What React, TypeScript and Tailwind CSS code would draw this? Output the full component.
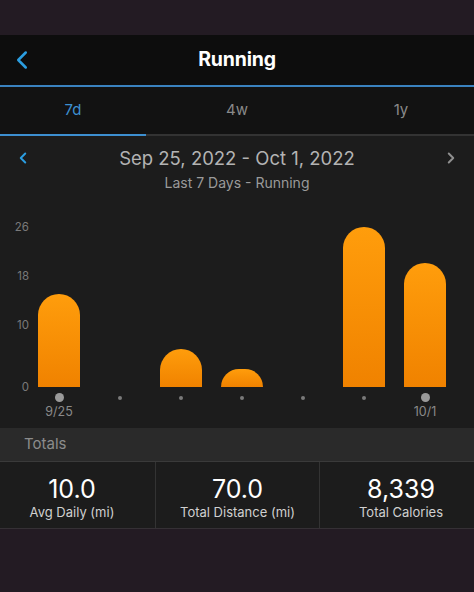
import { ChevronLeft, ChevronRight } from 'lucide-react';

const days = [
  { height: 93, label: '9/25', major: true },
  { height: 0, label: '', major: false },
  { height: 38, label: '', major: false },
  { height: 18, label: '', major: false },
  { height: 0, label: '', major: false },
  { height: 160, label: '', major: false },
  { height: 124, label: '10/1', major: true },
];

// px per mile on the chart (0 -> baseline, 26 -> 160px up)
const axis = [26, 18, 10, 0];
const SCALE = 160 / 26;
const CHART_H = 194;

const stats = [
  { value: '10.0', label: 'Avg Daily (mi)', pad: 'pr-[11px]' },
  { value: '70.0', label: 'Total Distance (mi)', pad: '' },
  { value: '8,339', label: 'Total Calories', pad: 'pl-[8px]' },
];

const App = () => {
  return (
    <div
      className="w-[474px] h-[592px] bg-[#231b23] flex flex-col"
      style={{ fontFamily: 'Inter, "Noto Sans", sans-serif' }}
    >
      <div className="h-[35px]" />

      {/* header */}
      <div className="h-[52px] bg-[#0d0d0d] border-b-[2px] border-[#3a82bf] relative flex items-center justify-center">
        <ChevronLeft className="absolute left-[7px] top-[10px] text-[#2b9de0]" size={30} strokeWidth={2} />
        <h1 className="text-[19.5px] font-bold text-white tracking-[-0.2px]">Running</h1>
      </div>

      {/* tabs */}
      <div className="bg-[#121212]">
        <div className="flex h-[47px] items-center text-[15px]">
          <div className="w-[146px] text-center text-[#3d8fd0]">7d</div>
          <div className="w-[182px] text-center text-[#8a8a8a]">4w</div>
          <div className="w-[146px] text-center text-[#8a8a8a]">1y</div>
        </div>
        <div className="flex h-[2px]">
          <div className="w-[146px] bg-[#3d8fd0]" />
          <div className="flex-1 bg-[#333333]" />
        </div>
      </div>

      {/* chart panel */}
      <div className="bg-[#1c1c1c] pt-[10px] pb-[8px]">
        <div className="relative flex items-center justify-center h-[24px]">
          <ChevronLeft className="absolute left-[14px] top-[3px] text-[#2b9de0]" size={18} strokeWidth={2.6} />
          <span className="text-[18.5px] leading-[24px] text-[#b3b3b3]">Sep 25, 2022 - Oct 1, 2022</span>
          <ChevronRight className="absolute right-[14px] top-[3px] text-[#8f8f8f]" size={18} strokeWidth={2.6} />
        </div>
        <div className="mt-[3px] text-center text-[14px] leading-[20px] text-[#9a9a9a]">Last 7 Days - Running</div>

        <div className="relative" style={{ height: CHART_H }}>
          {axis.map(v => (
            <div
              key={v}
              className="absolute left-0 w-[29px] text-right text-[11.5px] leading-[14px] text-[#7a7a7a]"
              style={{ top: CHART_H - v * SCALE - 7 }}
            >
              {v}
            </div>
          ))}
          <div className="flex items-end h-full pl-[38px] gap-[19px]">
            {days.map((d, i) => (
              <div key={i} className="w-[42px] flex flex-col justify-end h-full">
                {d.height > 0 && (
                  <div
                    className="w-full rounded-t-full bg-gradient-to-b from-[#ff9d0c] to-[#f08200]"
                    style={{ height: d.height }}
                  />
                )}
              </div>
            ))}
          </div>
        </div>

        <div className="flex pl-[38px] gap-[19px]">
          {days.map((d, i) => (
            <div key={i} className="w-[42px] flex flex-col items-center pt-[6px]">
              <div className="h-[9px] flex items-center justify-center">
                {d.major ? (
                  <div className="w-[9px] h-[9px] rounded-full bg-[#9a9a9a]" />
                ) : (
                  <div className="w-[4px] h-[4px] rounded-full bg-[#7a7a7a]" />
                )}
              </div>
              <div className="mt-[2px] h-[16px] text-[12.5px] leading-[16px] text-[#8a8a8a]">{d.label}</div>
            </div>
          ))}
        </div>
      </div>

      {/* totals */}
      <div className="h-[34px] bg-[#2a2a2a] border-b border-[#3a3a3a] flex items-center pl-[24px] text-[15px] text-[#8c8c8c]">
        Totals
      </div>
      <div className="grid grid-cols-[155px_164px_155px] bg-[#1c1c1c] border-b border-[#353035]">
        {stats.map((s, i) => (
          <div
            key={s.label}
            className={`h-[66px] pt-[3px] flex flex-col items-center justify-center ${s.pad} ${i > 0 ? 'border-l border-[#333333]' : ''}`}
          >
            <div className="text-[25px] leading-[30px] text-white">{s.value}</div>
            <div className="text-[13px] leading-[16px] text-[#d0d0d0]">{s.label}</div>
          </div>
        ))}
      </div>
    </div>
  );
};

export default App;
